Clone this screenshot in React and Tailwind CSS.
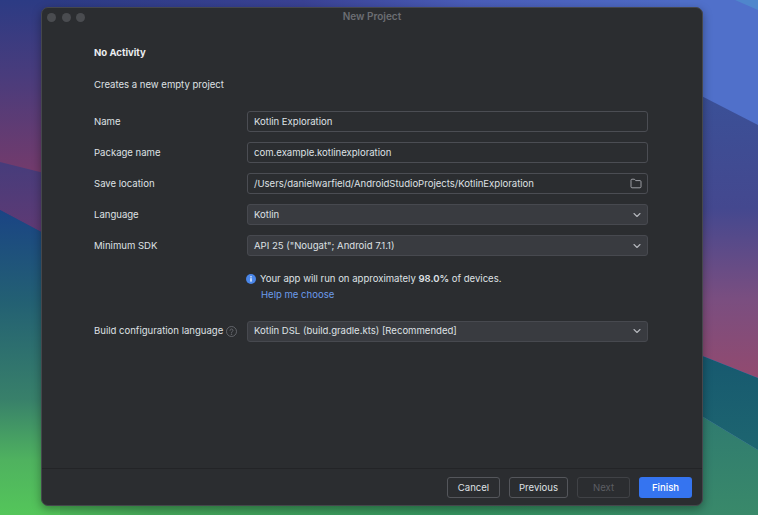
import React from "react";

const font = { fontFamily: '"Inter", "Liberation Sans", sans-serif' };

function Chevron() {
  return (
    <svg width="8" height="8" viewBox="0 0 8 8" fill="none" stroke="#b4b6bc" strokeWidth="1.1" strokeLinecap="round" strokeLinejoin="round">
      <path d="M1 2.5l3 3 3-3" />
    </svg>
  );
}

function Folder() {
  return (
    <svg width="12" height="11" viewBox="0 0 12 11" fill="none" stroke="#a8aab0" strokeWidth="0.9" strokeLinejoin="round">
      <path d="M1 2.2c0-.6.4-1 1-1h2.4l1.3 1.4H10c.6 0 1 .4 1 1v5.2c0 .6-.4 1-1 1H2c-.6 0-1-.4-1-1z" />
    </svg>
  );
}

function Row({ label, children, extra }) {
  return (
    <div className="flex items-center h-[21px]">
      <div className="w-[153px] shrink-0 flex items-center gap-[3px] whitespace-nowrap">
        <span>{label}</span>
        {extra}
      </div>
      {children}
    </div>
  );
}

function Input({ value, icon }) {
  return (
    <div className="w-[401px] h-[21px] rounded-[3px] border border-[#4b4d53] bg-[#2b2d30] pl-[6px] pr-[5px] flex items-center justify-between text-[#dfe1e5]">
      <span>{value}</span>
      {icon}
    </div>
  );
}

function Select({ value }) {
  return (
    <div className="w-[401px] h-[21px] rounded-[3px] border border-[#47494f] bg-[#393b40] pl-[6px] pr-[6px] flex items-center justify-between text-[#dfe1e5]">
      <span>{value}</span>
      <Chevron />
    </div>
  );
}

function Btn({ children, cls }) {
  return (
    <div className={`h-[21px] rounded-[3px] flex items-center justify-center ${cls}`}>{children}</div>
  );
}

function Wallpaper() {
  return (
    <svg className="absolute inset-0" width="758" height="515" viewBox="0 0 758 515">
      <defs>
        <linearGradient id="l1" x1="0" y1="0" x2="0" y2="172" gradientUnits="userSpaceOnUse">
          <stop offset="0" stopColor="#2c3b84" />
          <stop offset="0.45" stopColor="#4a3c7c" />
          <stop offset="1" stopColor="#733b6c" />
        </linearGradient>
        <linearGradient id="l2" x1="0" y1="165" x2="0" y2="232" gradientUnits="userSpaceOnUse">
          <stop offset="0" stopColor="#473c7b" />
          <stop offset="1" stopColor="#5f3a74" />
        </linearGradient>
        <linearGradient id="l3" x1="0" y1="210" x2="0" y2="515" gradientUnits="userSpaceOnUse">
          <stop offset="0" stopColor="#1a4484" />
          <stop offset="0.3" stopColor="#236073" />
          <stop offset="0.62" stopColor="#38806a" />
          <stop offset="0.82" stopColor="#4fb25f" />
          <stop offset="1" stopColor="#54c65a" />
        </linearGradient>
        <linearGradient id="r1" x1="0" y1="95" x2="0" y2="378" gradientUnits="userSpaceOnUse">
          <stop offset="0" stopColor="#3a5097" />
          <stop offset="0.4" stopColor="#44488f" />
          <stop offset="0.72" stopColor="#7a4e80" />
          <stop offset="1" stopColor="#924a6f" />
        </linearGradient>
        <linearGradient id="r2" x1="0" y1="357" x2="0" y2="450" gradientUnits="userSpaceOnUse">
          <stop offset="0" stopColor="#17596f" />
          <stop offset="1" stopColor="#1d6570" />
        </linearGradient>
        <linearGradient id="r3" x1="0" y1="408" x2="0" y2="515" gradientUnits="userSpaceOnUse">
          <stop offset="0" stopColor="#2f7a70" />
          <stop offset="1" stopColor="#39896a" />
        </linearGradient>
        <linearGradient id="top" x1="0" y1="0" x2="758" y2="0" gradientUnits="userSpaceOnUse">
          <stop offset="0.05" stopColor="#2c3b84" />
          <stop offset="0.4" stopColor="#3a4294" />
          <stop offset="0.62" stopColor="#4a5db8" />
          <stop offset="1" stopColor="#5070ca" />
        </linearGradient>
        <linearGradient id="bot" x1="0" y1="0" x2="758" y2="0" gradientUnits="userSpaceOnUse">
          <stop offset="0" stopColor="#54c65a" />
          <stop offset="0.2" stopColor="#46a85a" />
          <stop offset="0.6" stopColor="#369460" />
          <stop offset="1" stopColor="#39896a" />
        </linearGradient>
      </defs>
      <rect width="758" height="515" fill="url(#top)" />
      <rect x="0" y="0" width="60" height="175" fill="url(#l1)" />
      <polygon points="0,162 60,177 60,242 0,210" fill="url(#l2)" />
      <polygon points="0,210 60,242 60,515 0,515" fill="url(#l3)" />
      <polygon points="680,0 758,0 758,125 680,85" fill="#5070ca" />
      <polygon points="735,0 758,0 758,10" fill="#4f86cc" />
      <polygon points="680,85 758,125 758,378 680,347" fill="url(#r1)" />
      <polygon points="680,347 758,378 758,450 680,403" fill="url(#r2)" />
      <polygon points="680,403 758,450 758,515 680,515" fill="url(#r3)" />
      <rect x="60" y="500" width="640" height="15" fill="url(#bot)" />
    </svg>
  );
}

export default function App() {
  return (
    <div className="relative w-[758px] h-[515px] overflow-hidden text-[9.55px] leading-none" style={font}>
      <Wallpaper />
      <div className="absolute left-[41px] top-[7px] w-[662px] h-[499px] rounded-[7px] bg-[#2b2d30] border border-[#45474c] shadow-[0_3px_10px_rgba(0,0,0,0.35)] flex flex-col text-[#dfe1e5]">
        <div className="relative h-[18px] shrink-0 flex items-center justify-center pb-[2px]">
          <div className="absolute left-[5px] top-[5px] flex gap-[5.7px]">
            <div className="w-[9px] h-[9px] rounded-full bg-[#4a4c50]" />
            <div className="w-[9px] h-[9px] rounded-full bg-[#4a4c50]" />
            <div className="w-[9px] h-[9px] rounded-full bg-[#4a4c50]" />
          </div>
          <span className="font-semibold text-[#6c6e73] text-[10px]">New Project</span>
        </div>
        <div className="flex-1 flex flex-col pl-[52px]">
          <div className="font-bold text-[#eceef1] mt-[22px]">No Activity</div>
          <div className="mt-[22px]">Creates a new empty project</div>
          <div className="mt-[22px] flex flex-col gap-[10px]">
            <Row label="Name"><Input value="Kotlin Exploration" /></Row>
            <Row label="Package name"><Input value="com.example.kotlinexploration" /></Row>
            <Row label="Save location">
              <Input value="/Users/danielwarfield/AndroidStudioProjects/KotlinExploration" icon={<Folder />} />
            </Row>
            <Row label="Language"><Select value="Kotlin" /></Row>
            <Row label="Minimum SDK"><Select value='API 25 ("Nougat"; Android 7.1.1)' /></Row>
          </div>
          <div className="ml-[152px] mt-[18px] flex items-center gap-[4px]">
            <svg width="10" height="10" viewBox="0 0 11 11">
              <circle cx="5.5" cy="5.5" r="5.5" fill="#4a86e8" />
              <rect x="4.8" y="4.6" width="1.4" height="3.8" fill="#fff" />
              <rect x="4.8" y="2.4" width="1.4" height="1.4" fill="#fff" />
            </svg>
            <span>Your app will run on approximately <b className="font-semibold">98.0%</b> of devices.</span>
          </div>
          <div className="ml-[167px] mt-[6px] text-[#6b9bea]">Help me choose</div>
          <div className="mt-[21px]">
            <Row
              label="Build configuration language"
              extra={
                <svg width="11" height="11" viewBox="0 0 11 11" fill="none" stroke="#6f7177" strokeWidth="0.8">
                  <circle cx="5.5" cy="5.5" r="5" />
                  <path d="M4 4.4c0-.9.7-1.4 1.5-1.4s1.5.5 1.5 1.3c0 1.1-1.5 1.1-1.5 2.3" strokeLinecap="round" />
                  <circle cx="5.5" cy="8.2" r="0.35" fill="#6f7177" />
                </svg>
              }
            >
              <Select value="Kotlin DSL (build.gradle.kts) [Recommended]" />
            </Row>
          </div>
        </div>
        <div className="h-[37px] shrink-0 border-t border-[#232427] flex items-start justify-end gap-[9px] pt-[8px] pr-[10px]">
          <Btn cls="w-[53px] border border-[#54565b] text-[#dfe1e5]">Cancel</Btn>
          <Btn cls="w-[59px] border border-[#54565b] text-[#dfe1e5]">Previous</Btn>
          <Btn cls="w-[53px] border border-[#404246] text-[#5c5e63]">Next</Btn>
          <Btn cls="w-[53px] bg-[#3574f0] text-white font-medium">Finish</Btn>
        </div>
      </div>
    </div>
  );
}
